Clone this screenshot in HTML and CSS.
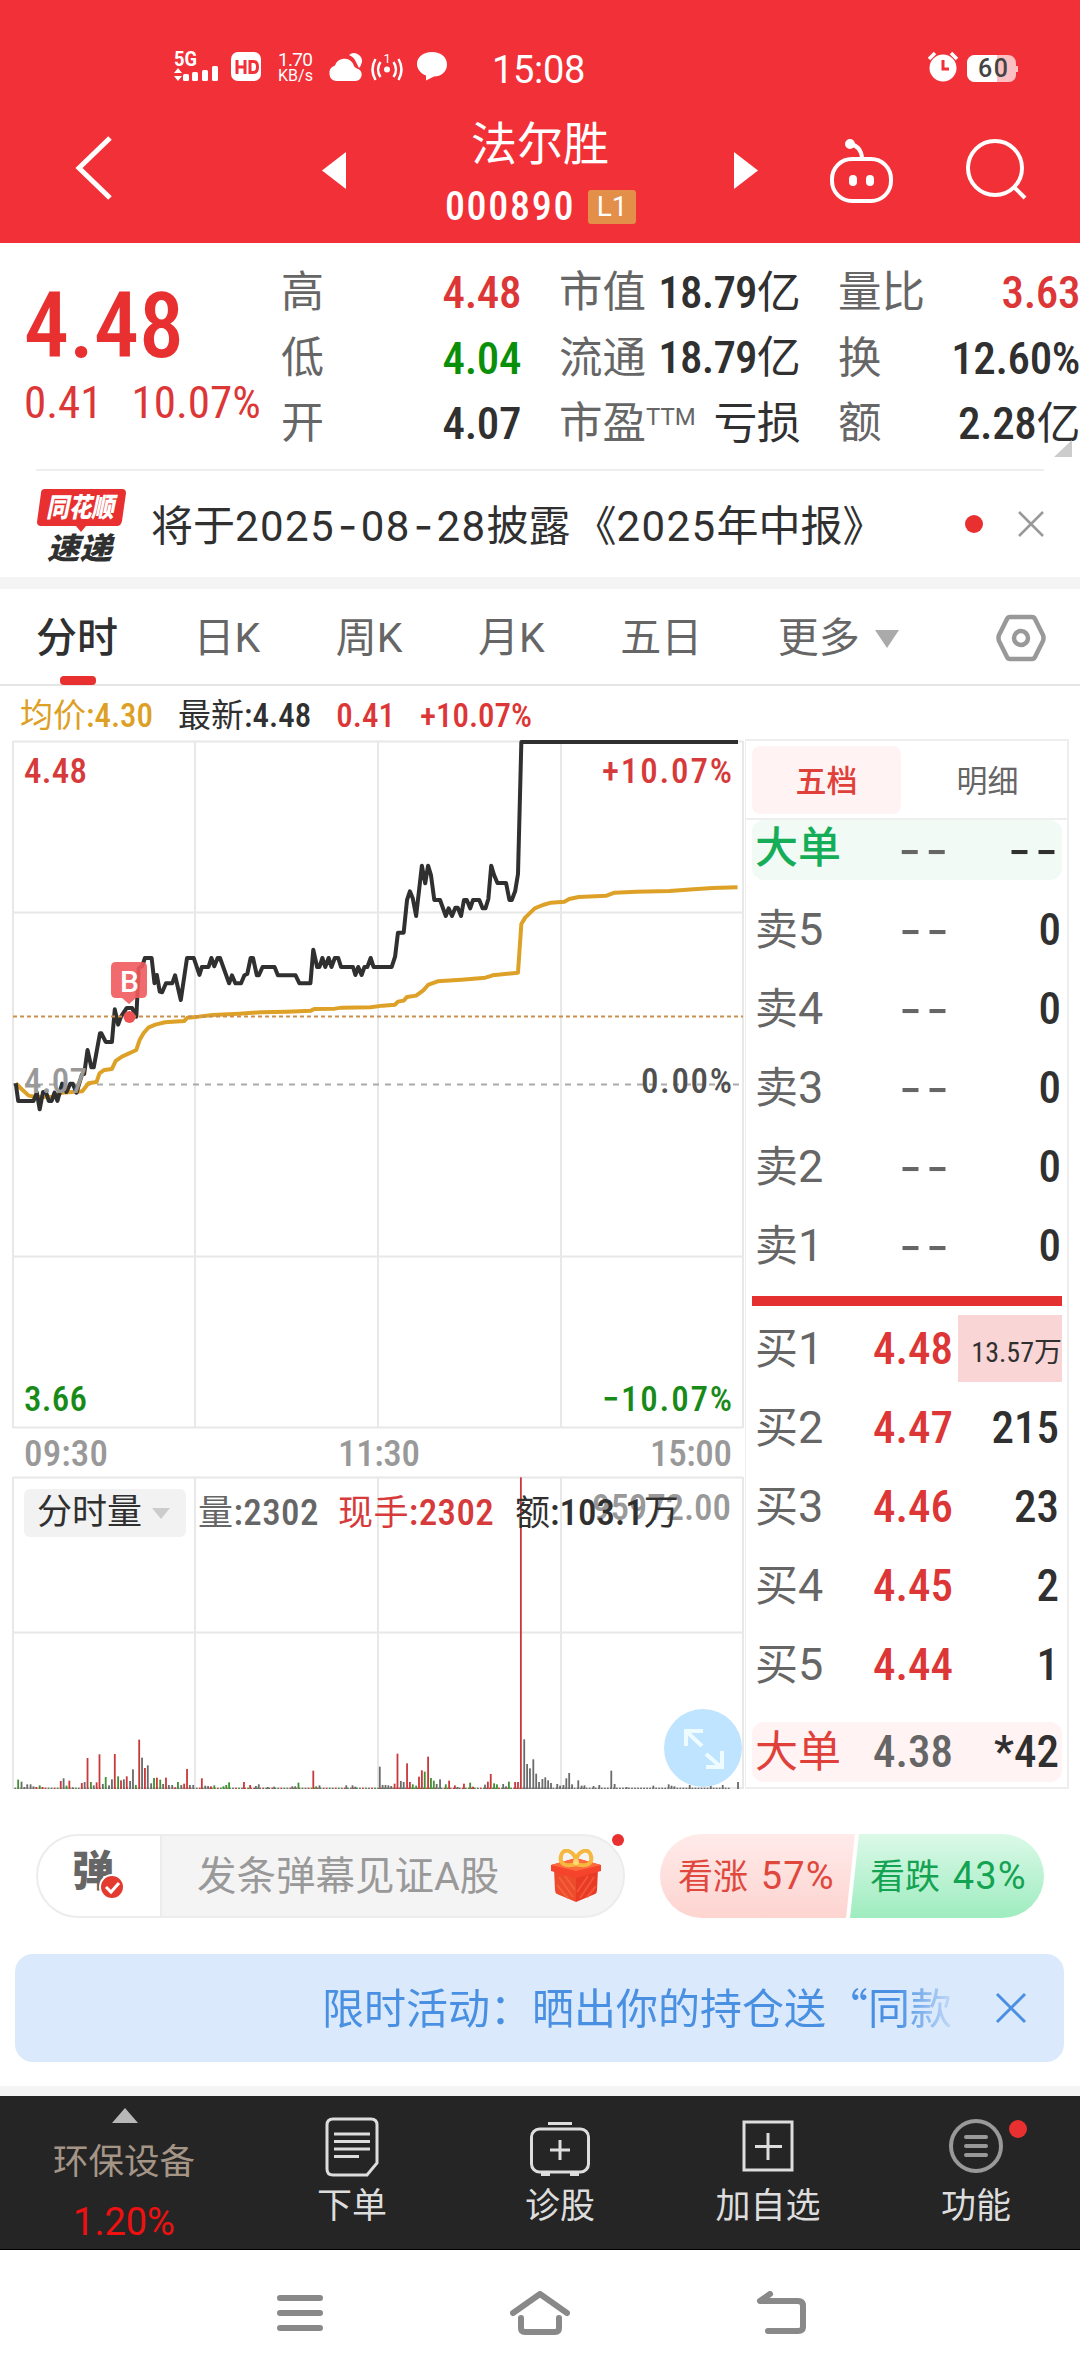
FILE: index.html
```
<!DOCTYPE html>
<html lang="zh-CN">
<head>
    <meta charset="UTF-8">
    <meta name="viewport" content="width=device-width, initial-scale=1.0">
    <title>法尔胜 000890</title>
    <link rel="stylesheet" href="styles.css">
</head>
<body>

<!-- Header -->
<header class="header">
    <div class="status-bar">
        <svg class="status-icons" width="290" height="44" viewBox="0 0 290 44" fill="#fff">
            <text class="st-5g" x="0" y="18" textLength="23" lengthAdjust="spacingAndGlyphs">5G</text>
            <path d="M0 25l4-5 4 5zM0 28h8l-4 5z"/>
            <rect x="9" y="26" width="6" height="7" rx="1.5"/>
            <rect x="18" y="24" width="6" height="9" rx="1.5"/>
            <rect x="28" y="22" width="6" height="11" rx="1.5"/>
            <rect x="38" y="18" width="6" height="15" rx="1.5"/>
            <rect x="57" y="4" width="30" height="29" rx="7"/>
            <path d="M63 12v14M71 12v14M63 19h8M76 13.500h3.500q4 0 4 5.500t-4 5.500H76z" fill="none" stroke="#f13037" stroke-width="3"/>
            <text class="st-speed" x="104" y="18" textLength="35">1.70</text>
            <text class="st-speed st-unit" x="104" y="33" textLength="35">KB/s</text>
            <path d="M162 33a8 8 0 0 1-1-15.500a10 10 0 0 1 18-2q1 4 4 5a7 6.500 0 0 1-1 12.500z"/>
            <path d="M175 7a8 8 0 0 1 13 7q-1 4-3 6l-3-6q-2-5-7-7z"/>
            <circle cx="213" cy="21.500" r="3"/>
            <path d="M206.500 14q-5 7.500 0 15M219.500 14q5 7.500 0 15M201.500 11q-6 10.500 0 21M224.500 11q6 10.500 0 21" fill="none" stroke="#fff" stroke-width="2.500"/>
            <text class="st-one" x="209.500" y="15">1</text>
            <path d="M258 4c9 0 15 5 15 12.500s-6 12-13 12l-8 4v-5c-5-2-9-6-9-11.500C243 9 249 4 258 4z"/>
        </svg>
        <span class="clock">15:08</span>
        <svg width="100" height="44" viewBox="0 0 100 44">
            <circle cx="17" cy="20" r="13.500" fill="#fff"/>
            <path d="M3 11l6-6M31 11l-6-6" stroke="#fff" stroke-width="3.500"/>
            <path d="M17 12v9h6" fill="none" stroke="#f13037" stroke-width="3"/>
            <path d="M49 7h33a8 8 0 0 1 8 8v3h2v6h-2v3a7 7 0 0 1-7 7H49a8 8 0 0 1-8-8V15a8 8 0 0 1 8-8z" fill="#fcbfc2"/>
            <path d="M49 7h22v27H49a8 8 0 0 1-8-8V15a8 8 0 0 1 8-8z" fill="#fff"/>
            <text class="battery" x="52" y="29" textLength="30">60</text>
        </svg>
    </div>
    <div class="title-bar">
        <svg class="back" width="40" height="66" viewBox="0 0 40 66"><path d="M36 3L5 33L36 63" fill="none" stroke="#fff" stroke-width="5"/></svg>
        <svg class="prev" width="24" height="38" viewBox="0 0 24 38"><path d="M24 0v37L0 18.500z" fill="#fff"/></svg>
        <div class="stock">
            <div class="stock-name">法尔胜</div>
            <div class="stock-code">000890<span class="level">L1</span></div>
        </div>
        <svg class="next" width="24" height="38" viewBox="0 0 24 38"><path d="M0 0v37L24 18.500z" fill="#fff"/></svg>
        <svg class="robot" width="66" height="66" viewBox="0 0 66 66" fill="none" stroke="#fff" stroke-width="4">
            <rect x="3" y="21" width="59" height="42" rx="20"/>
            <path d="M33 20q-1-12-12-14"/>
            <circle cx="21" cy="6" r="3" fill="#fff"/>
            <rect x="21" y="38" width="6" height="9" rx="3" fill="#fff" stroke-width="2"/>
            <rect x="38" y="38" width="6" height="9" rx="3" fill="#fff" stroke-width="2"/>
        </svg>
        <svg class="search" width="62" height="62" viewBox="0 0 62 62" fill="none" stroke="#fff" stroke-width="4">
            <circle cx="29" cy="29" r="27"/>
            <path d="M48 48l11 11"/>
        </svg>
    </div>
</header>

<!-- Quote -->
<section class="quote">
    <div class="price-box">
        <div class="price">4.48</div>
        <div class="change"><span>0.41</span><span>10.07%</span></div>
    </div>
    <div class="quote-col col-a">
        <div><label>高</label><b class="red">4.48</b></div>
        <div><label>低</label><b class="green">4.04</b></div>
        <div><label>开</label><b>4.07</b></div>
    </div>
    <div class="quote-col col-b">
        <div><label>市值</label><b>18.79<em>亿</em></b></div>
        <div><label>流通</label><b>18.79<em>亿</em></b></div>
        <div><label>市盈<sup>TTM</sup></label><b><em>亏损</em></b></div>
    </div>
    <div class="quote-col col-c">
        <div><label>量比</label><b class="red">3.63</b></div>
        <div><label>换</label><b>12.60%</b></div>
        <div><label>额</label><b>2.28<em>亿</em></b></div>
    </div>
    <i class="corner"></i>
</section>

<!-- Notice -->
<section class="notice">
    <svg width="90" height="76" viewBox="0 0 90 76">
        <path d="M8 0h77q4 0 4 4l-4 28q-1 5-5 5H49l-5 6-5-6H4q-4 0-4-4L4 4q0-4 4-4z" fill="#e83030"/>
        <text class="logo-top" x="9" y="28" textLength="68" lengthAdjust="spacingAndGlyphs">同花顺</text>
        <text class="logo-bottom" x="10" y="70" textLength="65" lengthAdjust="spacingAndGlyphs">速递</text>
    </svg>
    <p>将于<span>2025<s>-</s>08<s>-</s>28</span>披露<em>《</em><span>2025</span>年中报》</p>
    <i class="dot"></i>
    <svg class="close" width="26" height="26" viewBox="0 0 26 26"><path d="M1 1l24 24M25 1L1 25" stroke="#999" stroke-width="2.500"/></svg>
</section>

<!-- Period tabs -->
<nav class="tabs">
    <span class="active">分时</span>
    <span>日K</span>
    <span>周K</span>
    <span>月K</span>
    <span>五日</span>
    <span class="more">更多<i></i></span>
    <svg width="50" height="48" viewBox="0 0 50 48" fill="none" stroke="#999" stroke-width="4.500">
        <path d="M14 3h22q2 0 3 2l8 16q1 3 0 6l-8 16q-1 2-3 2H14q-2 0-3-2L3 27q-1-3 0-6l8-16q1-2 3-2z"/>
        <circle cx="25" cy="24" r="7"/>
    </svg>
</nav>

<main class="market">
    <section class="charts">
        <div class="info"><span class="gold">均价<b>:4.30</b></span><span>最新<b>:4.48</b></span><b class="red">0.41</b><b class="red">+10.07%</b></div>

        <svg class="price-chart" width="745" height="736" viewBox="0 739 745 736">
            <g class="grid">
                <path d="M13 741.500H743M13 912.500H743M13 1256.500H743M13 1427.500H743"/>
                <path d="M13 741V1428M195 741V1428M378 741V1428M561 741V1428M743 741V1428"/>
            </g>
            <path d="M13 1084.500H740" stroke="#aaa" stroke-width="2" stroke-dasharray="6 6"/>
            <g class="lines" transform="translate(0 720) scale(0.4783 0.3333)">
                <polyline class="avg" points="33,1090 45,1107 60,1127 75,1131 110,1130 130,1118 172,1114 185,1090 202,1086 208,1060 218,1050 234,1047 242,1023 255,1010 285,990 292,960 300,940 311,922 325,914 345,907 385,903 392,893 415,890 445,885 500,881 545,877 600,875 650,872 657,867 700,866 715,863 775,862 800,857 826,854 832,845 844,842 851,831 870,827 885,811 895,795 915,784 965,779 1015,773 1030,766 1083,758 1090,612 1098,593 1118,565 1135,555 1152,548 1180,545 1190,537 1210,531 1268,527 1285,518 1330,515 1400,513 1450,508 1490,504 1542,502"/>
                <polyline class="last" points="33,1090 38,1143 70,1143 77,1118 83,1168 90,1116 96,1116 102,1143 108,1143 114,1118 120,1143 130,1091 139,1116 147,1091 152,1091 160,1118 171,1065 176,1062 183,990 191,1042 196,1042 209,940 212,940 221,966 234,966 240,868 247,914 253,890 265,864 276,864 285,890 290,745 297,739 303,714 317,714 323,790 328,765 334,815 339,817 347,790 360,790 366,766 378,840 391,714 405,714 417,765 422,741 436,741 442,714 448,739 455,714 460,714 479,790 485,766 492,790 504,790 511,766 517,762 524,714 529,714 537,766 541,766 549,741 574,741 581,766 618,766 626,790 649,790 655,689 663,741 668,741 674,714 680,741 687,714 693,741 700,714 707,714 713,741 738,741 743,765 749,741 756,765 762,741 768,741 775,714 781,741 819,741 826,710 832,638 844,638 851,540 857,514 863,535 870,588 882,437 889,490 895,437 901,465 908,540 920,540 932,588 938,565 945,588 952,563 957,563 964,588 970,540 976,540 983,565 989,540 1002,540 1009,565 1015,565 1021,537 1027,437 1033,465 1040,489 1058,489 1065,540 1070,540 1077,514 1083,462 1090,66 1543,66"/>
            </g>
            <path d="M13 1016.500H743" stroke="#c98f4e" stroke-width="2" stroke-dasharray="4 3"/>
            <text class="lbl base" x="24" y="1093" textLength="63">4.07</text>
            <circle cx="129.500" cy="1017" r="6" fill="#ec5252"/>
            <path d="M116 962h26q5 0 5 5v26q0 5-5 5h-6l-7 6-7-6h-6q-5 0-5-5v-26q0-5 5-5z" fill="#ef5b5e" opacity=".9"/>
            <text class="buy-mark" x="129.500" y="992">B</text>
            <text class="lbl up" x="24" y="783" textLength="63">4.48</text>
            <text class="lbl up" x="602" y="783" textLength="130">+10.07%</text>
            <text class="lbl zero" x="641" y="1093" textLength="91">0.00%</text>
            <text class="lbl down" x="24" y="1411" textLength="63">3.66</text>
            <text class="lbl down" x="602" y="1411" textLength="130">−10.07%</text>
            <text class="lbl time" x="24" y="1466" textLength="84">09:30</text>
            <text class="lbl time" x="338" y="1466" textLength="82">11:30</text>
            <text class="lbl time" x="650" y="1466" textLength="82">15:00</text>
        </svg>

        <div class="volume">
            <svg width="745" height="314" viewBox="0 1475 745 314">
                <g class="grid">
                    <path d="M13 1477.500H743M13 1632.500H743M13 1788H743"/>
                    <path d="M13 1477V1789M195 1477V1789M378 1477V1789M561 1477V1789M743 1477V1789"/>
                </g>
                <g id="bars"></g>
                <text class="lbl time" x="592" y="1520" textLength="139">95972.00</text>
            </svg>
            <div class="volume-info">
                <span class="select">分时量<i></i></span>
                <span class="vol">量<b>:2302</b></span>
                <span class="hand">现手<b>:2302</b></span>
                <span class="amount">额<b>:103.1</b>万</span>
            </div>
            <svg class="expand" width="78" height="78" viewBox="0 0 78 78" fill="none" stroke="#effcff" stroke-width="4">
                <circle cx="39" cy="39" r="39" fill="#bfe4ff" stroke="none"/>
                <path d="M22 37V22h17M23 23l15 14M42 45l15 13M58 42v16H42"/>
            </svg>
        </div>
    </section>

    <!-- Order book -->
    <aside class="book">
        <div class="book-tabs"><span class="on">五档</span><span>明细</span></div>
        <div class="big sell"><label>大单</label><u>--</u><u class="dark">--</u></div>
        <div class="rows">
            <div><label>卖<s>5</s></label><u>--</u><b>0</b></div>
            <div><label>卖<s>4</s></label><u>--</u><b>0</b></div>
            <div><label>卖<s>3</s></label><u>--</u><b>0</b></div>
            <div><label>卖<s>2</s></label><u>--</u><b>0</b></div>
            <div><label>卖<s>1</s></label><u>--</u><b>0</b></div>
        </div>
        <div class="divider"></div>
        <div class="rows buy">
            <div><label>买<s>1</s></label><b class="red">4.48</b><b class="flash">13.57<em>万</em></b></div>
            <div><label>买<s>2</s></label><b class="red">4.47</b><b>215</b></div>
            <div><label>买<s>3</s></label><b class="red">4.46</b><b>23</b></div>
            <div><label>买<s>4</s></label><b class="red">4.45</b><b>2</b></div>
            <div><label>买<s>5</s></label><b class="red">4.44</b><b>1</b></div>
        </div>
        <div class="big bid"><label>大单</label><b class="grey">4.38</b><b>*42</b></div>
    </aside>
</main>

<!-- Danmaku and vote -->
<section class="social">
    <div class="danmaku">
        <div class="toggle">弹
            <svg width="26" height="26" viewBox="0 0 26 26"><circle cx="13" cy="13" r="12" fill="#e33b30" stroke="#fff" stroke-width="2"/><path d="M7 13l5 5 8-9" fill="none" stroke="#fff" stroke-width="3"/></svg>
        </div>
        <div class="placeholder">发条弹幕见证A股</div>
        <svg class="gift" width="50" height="54" viewBox="0 0 50 54">
            <path d="M3 20l22 6v27L6 45q-2-1-2-4z" fill="#ee4a2c"/>
            <path d="M47 20l-22 6v27l19-8q2-1 2-4z" fill="#e93a24"/>
            <path d="M8 28l14 20M14 27l10 14M6 36l11 13" stroke="#f2603c" stroke-width="2"/>
            <path d="M43 28L29 49M37 27L26 43M45 37l-9 11" stroke="#f2553a" stroke-width="2"/>
            <path d="M0 16l25-7 25 7v6l-25 7-25-7z" fill="#f6432c"/>
            <path d="M0 16l25-7 25 7-25 6z" fill="#ff6a3d"/>
            <path d="M25 15C16 18 8 16 10 7s12-6 15 4c3-10 13-13 15-4s-6 11-15 8z" fill="none" stroke="#f6b73f" stroke-width="4"/>
            <circle cx="25" cy="13" r="3" fill="#ffd872"/>
        </svg>
        <i class="dot"></i>
    </div>
    <div class="vote">
        <div class="rise">看涨 <span>57%</span></div>
        <div class="fall">看跌 <span>43%</span></div>
    </div>
</section>

<section class="banner">
    <p>限时活动：晒出你的持仓送<q>“</q>同款</p>
    <svg width="32" height="32" viewBox="0 0 32 32"><path d="M2 2l28 28M30 2L2 30" stroke="#4a90e2" stroke-width="3"/></svg>
</section>

<!-- Bottom bar -->
<footer class="toolbar">
    <div class="sector"><i></i><span>环保设备</span><b>1.20%</b></div>
    <div class="tool">
        <svg width="60" height="60" viewBox="0 0 60 60" fill="none" stroke="#ddd" stroke-width="3">
            <path d="M11 2h38q6 0 6 6v38l-10 12H11q-6 0-6-6V8q0-6 6-6z"/>
            <path d="M12 17h36M12 24.500h36M12 32h36M12 39.500h25"/>
        </svg>
        下单
    </div>
    <div class="tool">
        <svg width="60" height="60" viewBox="0 0 60 60" fill="none" stroke="#ddd" stroke-width="3">
            <rect x="1.500" y="12" width="57" height="43" rx="8"/>
            <path d="M18 6.500h24M30 23v20M20 33h20M11 57.500h9M40 57.500h9"/>
        </svg>
        诊股
    </div>
    <div class="tool">
        <svg width="60" height="60" viewBox="0 0 60 60" fill="none" stroke="#ddd" stroke-width="3">
            <rect x="6" y="5" width="48" height="48"/>
            <path d="M30 16v27M17 29.500h27"/>
        </svg>
        加自选
    </div>
    <div class="tool">
        <svg width="60" height="60" viewBox="0 0 60 60" fill="none" stroke="#999" stroke-width="4">
            <circle cx="30" cy="29" r="25"/>
            <path d="M20 20h20M20 29h20M20 38h20" stroke-linecap="round"/>
        </svg>
        功能
        <i class="dot"></i>
    </div>
</footer>

<div class="system-nav">
    <svg width="48" height="44" viewBox="0 0 48 44"><path d="M4 7h40M4 22h40M4 37h40"/></svg>
    <svg width="60" height="44" viewBox="0 0 60 44"><path d="M3 22L30 3l27 19M11 27v10q0 4 4 4h30q4 0 4-4V27"/></svg>
    <svg width="50" height="44" viewBox="0 0 50 44"><path d="M14 3L4 10h38q5 0 5 5v21q0 4-5 4H12"/></svg>
</div>

<script>
    // [x, height, colour] in chart units, one per minute
    const volumes = `38 28 g,45 22 k,51 6 k,57 14 k,64 14 k,70 8 k,76 6 r,83 11 g,89 6 r,127 24 r,133 32 k,139 10 g,145 25 r,
        152 5 k,171 18 r,177 21 k,183 93 r,190 21 g,196 11 k,202 20 r,208 104 r,215 15 k,221 36 g,228 11 k,234 29 k,240 105 r,
        247 38 g,253 26 r,259 29 k,265 38 r,272 24 k,278 59 k,284 12 g,291 148 r,297 94 k,303 63 r,309 71 k,316 17 k,322 33 g,
        328 34 r,335 28 g,341 15 k,347 34 r,353 12 k,360 12 k,366 5 r,372 21 g,379 12 k,385 16 r,391 60 r,397 12 k,404 12 k,
        422 32 r,429 10 k,435 9 k,441 8 r,448 11 g,467 8 g,473 12 g,479 20 g,510 21 r,523 12 r,535 9 k,541 14 k,560 6 k,573 7 k,
        611 8 k,617 8 k,624 19 g,655 55 r,661 8 g,668 11 k,724 11 k,737 11 k,743 7 k,794 67 k,800 12 k,806 12 k,812 11 k,818 9 k,
        825 16 r,831 106 r,838 24 k,844 21 k,851 77 r,857 21 r,863 14 g,870 10 g,876 37 r,882 56 r,888 52 g,895 97 r,901 33 g,
        907 25 g,913 15 k,920 29 k,932 14 g,939 25 r,951 11 r,957 6 k,970 16 r,983 19 g,989 7 r,1014 13 k,1020 22 r,1026 45 r,
        1033 17 g,1039 14 g,1052 15 k,1058 8 k,1064 22 g,1077 21 r,1083 21 r,1089 935 r,1096 149 k,1102 75 k,1108 62 k,1115 89 k,
        1121 46 k,1127 21 k,1134 30 k,1140 35 k,1146 26 k,1152 18 k,1165 15 k,1171 10 k,1178 12 k,1184 32 k,1190 48 k,1196 14 k,
        1209 26 k,1216 10 k,1222 11 k,1241 9 k,1253 12 k,1278 55 k,1285 15 k,1310 6 k,1366 10 k,1398 14 k,1404 10 k,1410 8 k,
        1442 12 k,1486 19 k,1511 12 k,1543 21 k`.split(',').map(v => v.trim().split(' '));
    const colors = { r: '#c9383a', g: '#3f8f33', k: '#6b6b6b' };
    const bars = document.getElementById('bars');

    function addBar(x, h, color) {
        const rect = document.createElementNS('http://www.w3.org/2000/svg', 'rect');
        rect.setAttribute('x', x / 2.0907 - 0.9);
        rect.setAttribute('y', 1789 - h / 3);
        rect.setAttribute('width', 1.8);
        rect.setAttribute('height', h / 3);
        rect.setAttribute('fill', color);
        bars.appendChild(rect);
    }

    for (let i = 0; i <= 236; i++) {
        addBar(32 + i * 6.32, 4, i > 168 ? colors.k : [colors.k, colors.r, colors.g][i % 3]);
    }
    volumes.forEach(v => addBar(v[0], v[1], colors[v[2]]));
</script>

</body>
</html>
```
FILE: styles.css
```
:root {
    --red: #dc3636;
    --green: #098f09;
    --dark: #303030;
    --grey: #666;
    --num: "Roboto Condensed", Roboto, "Noto Sans CJK SC", sans-serif;
}

* {
    box-sizing: border-box;
}

body {
    margin: 0;
    width: 1080px;
    font-family: Roboto, "Noto Sans CJK SC", sans-serif;
    background-color: #fff;
    color: var(--dark);
    white-space: nowrap;
}

svg {
    display: block;
    flex-shrink: 0;
}

p {
    margin: 0;
}

b, .price, .change {
    font-family: var(--num);
    font-weight: 500;
}

i, em, s, u, q {
    font-style: normal;
    text-decoration: none;
}

b em {
    font-weight: 400;
}

q::before, q::after {
    content: none;
}

.red {
    color: var(--red);
}

.green {
    color: var(--green);
}

.grey {
    color: var(--grey);
}

.dot {
    display: block;
    width: 18px;
    height: 18px;
    border-radius: 50%;
    background-color: #e83030;
}

/* Header */
.header {
    height: 243px;
    background-color: #f13037;
    color: #fff;
}

.status-bar {
    display: flex;
    height: 98px;
    padding: 48px 0 0 174px;
}

.clock {
    width: 120px;
    margin-left: 28px;
    font-size: 38px;
    line-height: 44px;
    letter-spacing: -0.3px;
}

.status-bar > svg:last-child {
    margin-left: 314px;
}

.st-5g {
    font: 700 20px Roboto;
}

.st-speed {
    font: 400 19px Roboto;
}

.st-unit {
    font-size: 16px;
}

.st-one {
    font: 400 13px Roboto;
}

.battery {
    font: 500 25px Roboto;
    fill: #444;
}

.title-bar {
    display: flex;
    align-items: flex-start;
    height: 145px;
}

.back {
    margin: 37px 0 0 74px;
}

.prev {
    margin: 54px 0 0 208px;
}

.stock {
    width: 388px;
    text-align: center;
}

.stock-name {
    font-size: 46px;
    line-height: 60px;
    margin-top: 16px;
}

.stock-code {
    display: flex;
    justify-content: center;
    align-items: center;
    padding-left: 1px;
    font: 500 40px/40px var(--num);
    letter-spacing: 1.7px;
    margin-top: 13px;
}

.level {
    width: 48px;
    height: 34px;
    margin-left: 13px;
    border-radius: 3px;
    background-color: #e38f4a;
    font: 400 28px/34px Roboto, sans-serif;
    letter-spacing: 0;
}

.next {
    margin-top: 54px;
}

.robot {
    margin: 40px 0 0 71px;
}

.search {
    margin: 41px 0 0 71px;
}

/* Quote */
.quote {
    position: relative;
    display: flex;
    height: 226px;
}

.price-box {
    width: 281px;
    padding-left: 24px;
    color: var(--red);
}

.price {
    margin-top: 31px;
    font-size: 90px;
    line-height: 106px;
    color: #e83030;
}

.change {
    display: flex;
    gap: 29px;
    font-size: 45px;
    line-height: 46px;
    font-weight: 400;
}

.quote-col {
    padding-top: 17px;
    font-size: 43px;
}

.quote-col div {
    display: flex;
    justify-content: space-between;
    align-items: center;
    height: 65.5px;
    line-height: 65px;
}

.quote-col label {
    color: var(--grey);
}

.quote-col b {
    font-size: 45px;
    letter-spacing: -0.4px;
}

.quote-col em {
    font-size: 44px;
}

.quote-col sup {
    font-size: 24px;
    line-height: 0;
    vertical-align: 13px;
}

.col-a {
    width: 240px;
    margin-right: 38px;
}

.col-b {
    width: 241px;
    margin-right: 38px;
}

.col-b label, .col-c label {
    font-size: 43.5px;
}

.col-b b {
    letter-spacing: -0.8px;
}

.col-c {
    width: 242px;
}

.corner {
    position: absolute;
    right: 8px;
    bottom: 12px;
    border-left: 18px solid transparent;
    border-bottom: 17px solid #ccc;
}

/* Notice */
.notice {
    display: flex;
    align-items: flex-start;
    height: 108px;
    margin: 0 36px;
    padding: 18px 0 0 1px;
    border-top: 2px solid #eee;
}

.logo-top {
    font: italic 900 27px/1 "Noto Sans CJK SC";
    fill: #fff;
}

.logo-bottom {
    font: italic 900 30px/1 "Noto Sans CJK SC";
    fill: #303030;
}

.notice p {
    width: 735px;
    margin-left: 24px;
    font-size: 42px;
    line-height: 73px;
}

.notice p span {
    letter-spacing: 1.4px;
}

.notice p s {
    padding: 0 2px 0 3px;
    font-family: Inter, sans-serif;
}

.notice em {
    margin-left: 4px;
}

.notice .dot {
    margin: 26px 0 0 80px;
}

.notice .close {
    margin: 22px 0 0 35px;
}

/* Tabs */
.tabs {
    display: flex;
    align-items: flex-start;
    height: 109px;
    padding: 19px 0 0 36px;
    border-top: 12px solid #f4f4f4;
    border-bottom: 2px solid #e5e5e5;
    font-size: 41px;
    line-height: 61px;
    color: var(--grey);
}

.tabs span {
    margin-right: 75.5px;
}

.tabs .active {
    color: var(--dark);
    font-weight: 500;
}

.tabs .active::after {
    content: "";
    display: block;
    width: 36px;
    height: 9px;
    margin: 7px auto 0 24px;
    border-radius: 4px;
    background-color: #e83030;
}

.tabs .more {
    display: flex;
    align-items: center;
    margin: 0 97px 0 0;
}

.more i {
    margin-left: 15px;
    border: 12px solid transparent;
    border-top: 18px solid #aaa;
    border-bottom: 0;
}

.tabs svg {
    margin-top: 6px;
}

/* Charts */
.market {
    display: flex;
    height: 1105px;
}

.charts {
    width: 745px;
}

.info {
    display: flex;
    height: 55px;
    padding-left: 20px;
    gap: 25px;
    font-size: 33px;
    line-height: 60px;
}

.info .gold {
    color: #dd9f24;
}

.grid path {
    stroke: #e8e8e8;
    stroke-width: 2;
}

.price-chart {
    margin-top: -2px;
}

.lines polyline {
    fill: none;
    stroke-width: 4;
    stroke-linejoin: round;
    vector-effect: non-scaling-stroke;
}

.avg {
    stroke: #dda128;
}

.last {
    stroke: #303030;
}

.lbl {
    font: 500 35px "Roboto Condensed", Roboto;
}

.lbl.up {
    fill: #d63a3a;
}

.lbl.down {
    fill: #178a17;
}

.lbl.base {
    fill: #999;
}

.lbl.zero {
    fill: #505050;
}

.lbl.time {
    font-size: 37px;
    fill: #999;
}

.buy-mark {
    font: 500 30px Roboto;
    fill: #fff;
    text-anchor: middle;
}

.volume {
    position: relative;
    height: 314px;
}

.volume-info {
    position: absolute;
    top: 14px;
    left: 24px;
    display: flex;
    font-size: 35px;
    line-height: 48px;
}

.volume-info b {
    font-size: 37px;
}

.select {
    display: flex;
    align-items: center;
    width: 162px;
    height: 48px;
    padding-left: 13px;
    border-radius: 6px;
    background-color: #f2f2f2;
}

.select i {
    margin-left: 10px;
    border: 9px solid transparent;
    border-top: 11px solid #ccc;
    border-bottom: 0;
}

.vol {
    width: 140px;
    margin-left: 12px;
    color: var(--grey);
    letter-spacing: 0.4px;
}

.hand {
    width: 177px;
    color: #d63a3a;
    letter-spacing: 0.4px;
}

.expand {
    position: absolute;
    left: 664px;
    top: 234px;
}

/* Order book */
.book {
    width: 324px;
    height: 1050px;
    margin-top: 53px;
    padding: 5px 5px 0 6px;
    border: 2px solid #eee;
    border-left-width: 1px;
}

.book label {
    width: 118px;
    color: var(--grey);
    font-size: 43px;
}

.book s {
    font-size: 45px;
}

.book u {
    width: 80px;
    font: 400 50px/40px Inter, sans-serif;
    letter-spacing: 4px;
    text-align: right;
    color: var(--grey);
}

.book u.dark {
    width: 110px;
    color: var(--dark);
}

.book b {
    width: 108px;
    font-size: 45px;
    text-align: right;
}

.book label + b {
    width: 75px;
}

.book label + b + b {
    width: 111px;
}

.book-tabs {
    display: flex;
    height: 74px;
    margin: 0 -5px 0 -6px;
    padding-left: 6px;
    border-bottom: 2px solid #eee;
    font-size: 31px;
    line-height: 72px;
    text-align: center;
    color: var(--grey);
}

.book-tabs span {
    width: 149px;
    height: 68px;
}

.book-tabs span + span {
    margin-left: 12px;
}

.book-tabs .on {
    border-radius: 8px;
    background-color: #fff3f3;
    color: #e0403a;
    font-weight: 500;
}

.big {
    display: flex;
    align-items: center;
    height: 60px;
    padding-left: 3px;
    border-radius: 12px;
    line-height: 56px;
}

.big.sell {
    background-color: #f2faf6;
}

.big.sell label {
    margin-top: -4px;
    color: #15ad58;
    font-weight: 500;
}

.big.bid {
    margin-top: 18px;
    background-color: #fff3f3;
}

.big.bid label {
    color: #e0403a;
}

.rows {
    padding: 10px 0 0 3px;
}

.rows div {
    display: flex;
    align-items: center;
    height: 79px;
    line-height: 77px;
}

.divider {
    height: 10px;
    margin-top: 11px;
    background-color: #e53030;
}

.rows.buy {
    padding-top: 3px;
}

.rows.buy div {
    height: 79px;
}

.book .rows .flash {
    width: 104px;
    height: 67px;
    margin-left: 10px;
    background-color: #f9d5d6;
    font-size: 28px;
    font-weight: 400;
    line-height: 76px;
}

/* Danmaku and vote */
.social {
    display: flex;
    height: 128px;
    margin-top: 43px;
    padding-left: 36px;
}

.danmaku {
    position: relative;
    display: flex;
    width: 589px;
    height: 84px;
    border: 2px solid #ececec;
    border-radius: 42px;
    background-color: #f4f4f4;
}

.toggle {
    position: relative;
    width: 124px;
    padding-left: 34px;
    border-right: 2px solid #ececec;
    border-radius: 42px 0 0 42px;
    background-color: #fff;
    font-size: 42px;
    font-weight: 900;
    line-height: 72px;
    color: var(--grey);
}

.toggle svg {
    position: absolute;
    left: 61px;
    top: 38px;
}

.placeholder {
    width: 352px;
    padding-left: 35px;
    font-size: 39.5px;
    line-height: 82px;
    color: #999;
}

.gift {
    margin: 13px 0 0 37px;
}

.danmaku .dot {
    position: absolute;
    right: -1px;
    top: -2px;
    width: 12px;
    height: 12px;
}

.vote {
    display: flex;
    width: 384px;
    height: 84px;
    margin-left: 35px;
    border-radius: 42px;
    overflow: hidden;
    font-size: 35px;
    line-height: 84px;
}

.vote span {
    margin-left: 4px;
    font-size: 38px;
    letter-spacing: 1.2px;
}

.rise {
    width: 195px;
    padding-left: 18px;
    background: linear-gradient(#ffebea, #fdd4d0);
    clip-path: polygon(0 0, 100% 0, 186px 100%, 0 100%);
    color: #e0483e;
}

.fall {
    width: 194px;
    margin-left: -5px;
    padding-left: 20px;
    background: linear-gradient(#dbf9e8, #9eecbf);
    clip-path: polygon(9px 0, 100% 0, 100% 100%, 0 100%);
    color: #14a352;
}

/* Banner */
.banner {
    display: flex;
    align-items: center;
    height: 108px;
    margin: -8px 16px 0 15px;
    padding-left: 307px;
    border-radius: 18px;
    background-color: #dae9fc;
}

.banner p {
    width: 640px;
    font-size: 42px;
    line-height: 110px;
    color: #4a90e2;
    -webkit-mask-image: linear-gradient(90deg, #000 575px, transparent 640px);
    mask-image: linear-gradient(90deg, #000 575px, transparent 640px);
}

.banner q {
    font-family: "Noto Sans CJK SC", sans-serif;
}

.banner svg {
    margin-left: 33px;
}

/* Bottom bar */
.toolbar {
    display: flex;
    height: 164px;
    margin-top: 24px;
    padding-left: 20px;
    border-top: 10px solid #f4f4f4;
    border-bottom: 1px solid #000;
    background-color: #252525;
    color: #ddd;
    font-size: 35px;
}

.sector {
    display: flex;
    flex-direction: column;
    align-items: center;
    width: 208px;
    padding: 12px 0 0;
    margin-right: 20px;
}

.sector i {
    margin-left: 2px;
    border: 13px solid transparent;
    border-top: 0;
    border-bottom: 15px solid #b8b8b8;
}

.sector span {
    font-size: 35.5px;
    line-height: 50px;
    margin-top: 14px;
    color: #a59587;
}

.sector b {
    font: 400 38px/44px Roboto, sans-serif;
    margin-top: 13px;
    color: #ee1111;
}

.tool {
    position: relative;
    display: flex;
    flex-direction: column;
    align-items: center;
    width: 208px;
    padding-top: 21px;
    line-height: 54px;
}

.tool svg {
    margin-bottom: 3px;
}

.tool .dot {
    position: absolute;
    left: 137px;
    top: 24px;
}

.system-nav {
    display: flex;
    height: 126px;
    padding: 41px 0 0 276px;
}

.system-nav svg {
    fill: none;
    stroke: #898989;
    stroke-width: 6;
    stroke-linecap: round;
    stroke-linejoin: round;
}

.system-nav svg + svg {
    margin-left: 186px;
}
```
